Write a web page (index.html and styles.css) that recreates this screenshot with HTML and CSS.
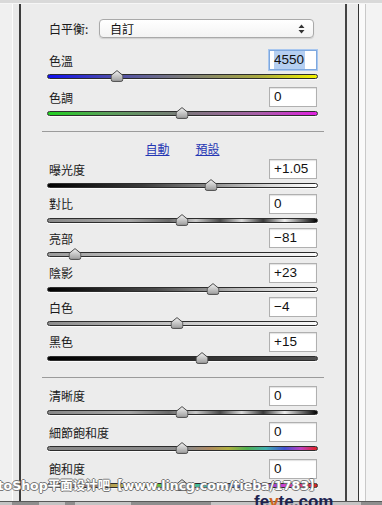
FILE: index.html
```html
<!DOCTYPE html>
<html lang="zh-Hant">
<head>
    <meta charset="UTF-8">
    <meta name="viewport" content="width=device-width, initial-scale=1.0">
    <title>基本調整</title>
    <link rel="stylesheet" href="styles.css">
</head>
<body>
    <svg class="defs" aria-hidden="true">
        <defs>
            <linearGradient id="thumb-fill" x1="0" y1="0" x2="0" y2="1">
                <stop offset="0" stop-color="#f2f2f2"/>
                <stop offset="1" stop-color="#9c9c9c"/>
            </linearGradient>
            <symbol id="thumb" viewBox="0 0 13 12">
                <path d="M6.5 0.6 L12.4 5.4 V9.4 Q12.4 11.4 10.4 11.4 H2.6 Q0.6 11.4 0.6 9.4 V5.4 Z" fill="url(#thumb-fill)" stroke="#4a4a4a" stroke-width="1"/>
            </symbol>
        </defs>
    </svg>

    <div class="screen">
        <div class="topbar"></div>

        <div class="columns">
            <div class="gutter g1"></div>
            <div class="gutter g2"></div>

            <div class="panel">
                <!-- 白平衡 -->
                <div class="wb-row">
                    <span class="wb-label">白平衡:</span>
                    <div class="select">
                        <span>自訂</span>
                        <svg class="updown" width="7" height="10" viewBox="0 0 7 10"><path d="M3.5 0.5 L6.5 4 H0.5 Z M3.5 9.5 L6.5 6 H0.5 Z" fill="#333"/></svg>
                    </div>
                </div>

                <div class="group group-wb">
                    <div class="row">
                        <div class="row-head"><span class="label">色溫</span><span class="num num-active"><span class="picked">4550</span></span></div>
                        <div class="track t-temp"><svg class="thumb" style="left:25.8%"><use href="#thumb"/></svg></div>
                    </div>
                    <div class="row">
                        <div class="row-head"><span class="label">色調</span><span class="num">0</span></div>
                        <div class="track t-tint"><svg class="thumb" style="left:49.8%"><use href="#thumb"/></svg></div>
                    </div>
                </div>

                <hr class="sep">

                <div class="links">
                    <a href="#">自動</a>
                    <a href="#">預設</a>
                </div>

                <div class="group group-tone">
                    <div class="row">
                        <div class="row-head"><span class="label">曝光度</span><span class="num">+1.05</span></div>
                        <div class="track t-exposure"><svg class="thumb" style="left:60.5%"><use href="#thumb"/></svg></div>
                    </div>
                    <div class="row">
                        <div class="row-head"><span class="label">對比</span><span class="num">0</span></div>
                        <div class="track t-contrast"><svg class="thumb" style="left:49.8%"><use href="#thumb"/></svg></div>
                    </div>
                    <div class="row">
                        <div class="row-head"><span class="label">亮部</span><span class="num">−81</span></div>
                        <div class="track t-highlights"><svg class="thumb" style="left:10%"><use href="#thumb"/></svg></div>
                    </div>
                    <div class="row">
                        <div class="row-head"><span class="label">陰影</span><span class="num">+23</span></div>
                        <div class="track t-shadows"><svg class="thumb" style="left:61.3%"><use href="#thumb"/></svg></div>
                    </div>
                    <div class="row">
                        <div class="row-head"><span class="label">白色</span><span class="num">−4</span></div>
                        <div class="track t-whites"><svg class="thumb" style="left:48%"><use href="#thumb"/></svg></div>
                    </div>
                    <div class="row">
                        <div class="row-head"><span class="label">黑色</span><span class="num">+15</span></div>
                        <div class="track t-blacks"><svg class="thumb" style="left:57.2%"><use href="#thumb"/></svg></div>
                    </div>
                </div>

                <hr class="sep sep-low">

                <div class="group group-presence">
                    <div class="row">
                        <div class="row-head"><span class="label">清晰度</span><span class="num">0</span></div>
                        <div class="track t-contrast"><svg class="thumb" style="left:49.8%"><use href="#thumb"/></svg></div>
                    </div>
                    <div class="row">
                        <div class="row-head"><span class="label">細節飽和度</span><span class="num">0</span></div>
                        <div class="track t-vibrance"><svg class="thumb" style="left:49.8%"><use href="#thumb"/></svg></div>
                    </div>
                    <div class="row">
                        <div class="row-head"><span class="label">飽和度</span><span class="num">0</span></div>
                        <div class="track t-saturation"><svg class="thumb" style="left:49.8%"><use href="#thumb"/></svg></div>
                    </div>
                </div>
            </div>

            <div class="gutter g3"></div>
            <div class="gutter g4"></div>
            <div class="gutter g5"></div>
            <div class="gutter g6"></div>
        </div>

        <div class="bottombar">
            <span class="seg s1"></span><span class="seg s2"></span><span class="seg s3"></span><span class="seg s4"></span>
        </div>

        <!-- 浮水印 -->
        <div class="watermark">PhotoShop平面设计吧【www.lincg.com/tieba/1783】</div>
        <div class="brand">fe<span>v</span>te.com</div>
    </div>
</body>
</html>
```

FILE: styles.css
```css
html, body {
    margin: 0;
    padding: 0;
}
body {
    width: 382px;
    height: 505px;
    overflow: hidden;
    background: #ececec;
    font-family: "Noto Sans CJK TC", "Noto Sans", sans-serif;
}
.defs {
    position: absolute;
    width: 0;
    height: 0;
    overflow: hidden;
}
.screen {
    position: relative;
    width: 382px;
    height: 505px;
    display: flex;
    flex-direction: column;
    overflow: hidden;
}
.topbar {
    height: 3px;
    background: #d9d9d9;
    border-bottom: 1px solid #f6f6f6;
}
.columns {
    flex: 1;
    display: flex;
    min-height: 0;
}
.gutter { flex: none; }
.g1 {
    width: 12px;
    background: #f0f0f0;
    border-right: 1px solid #fdfdfd;
}
.g2 {
    width: 6px;
    background: #e9e9e9;
    border-right: 2px solid #3c3c3c;
}
.g3 {
    width: 11px;
    background: #ebebeb;
    border-left: 2px solid #434343;
    border-right: 1px solid #333;
}
.g4 {
    width: 6px;
    background: #fafafa;
    border-right: 1px solid #c9c9c9;
}
.g6 {
    flex: 1;
    background: #f3f3f3;
}
.panel {
    width: 324px;
    flex: none;
    box-sizing: border-box;
    padding: 15px 27px 0 26px;
    background: #ececec;
}

/* 白平衡 select */
.wb-row {
    display: flex;
    align-items: center;
    height: 19px;
}
.wb-label {
    width: 52px;
    padding-left: 2px;
    box-sizing: border-box;
    font-size: 12px;
    color: #1a1a1a;
}
.select {
    width: 215px;
    height: 19px;
    box-sizing: border-box;
    display: flex;
    align-items: center;
    justify-content: space-between;
    padding: 0 8px 0 10px;
    background: linear-gradient(#ffffff, #f3f3f3);
    border: 1px solid #a9a9a9;
    border-radius: 4px;
    box-shadow: 0 1px 1px rgba(0,0,0,0.12);
    font-size: 12px;
    color: #111;
}

/* slider rows */
.group-wb { margin-top: 12px; }
.group-wb .row { margin-bottom: 8px; }
.group-wb .row:last-child { margin-bottom: 0; }
.group-tone .row { margin-bottom: 5.6px; }
.group-tone .row:last-child { margin-bottom: 0; }
.group-presence { margin-top: 8px; }
.group-presence .row { margin-bottom: 7.5px; }

.row-head {
    height: 20px;
    display: flex;
    align-items: center;
    justify-content: space-between;
}
.label {
    padding-left: 2px;
    font-size: 12px;
    color: #1a1a1a;
}
.num {
    width: 48px;
    height: 20px;
    margin-right: 1px;
    box-sizing: border-box;
    padding-left: 4px;
    background: #fff;
    border: 1px solid #b0b0b0;
    box-shadow: inset 0 1px 1px rgba(0,0,0,0.12);
    font-family: "Liberation Sans", Arial, sans-serif;
    font-size: 13.5px;
    line-height: 18px;
    color: #111;
}
.num-active {
    border-color: #7ea8de;
    box-shadow: 0 0 0 1px #a9c7ef;
}
.picked {
    display: inline-block;
    background: #b5cff1;
    padding-right: 1px;
}

.track {
    position: relative;
    height: 5px;
    margin-top: 4px;
    box-sizing: border-box;
    border: 1px solid #2d2d2d;
    border-radius: 3px;
    box-shadow: 0 1px 0 #fbfbfb;
}
.thumb {
    position: absolute;
    top: -5px;
    width: 13px;
    height: 12px;
    transform: translateX(-50%);
}
.t-temp { background: linear-gradient(to right, #1010f0, #4848b0 22%, #7a7a7a 50%, #a8a840 78%, #f2f200); }
.t-tint { background: linear-gradient(to right, #20d020, #5aa05a 22%, #7a7a7a 50%, #a860a8 78%, #e020e0); }
.t-exposure { background: linear-gradient(to right, #000, #3a3a3a 35%, #8a8a8a 60%, #d8d8d8 82%, #fff); }
.t-contrast { background: linear-gradient(to right, #888 0%, #a8a8a8 30%, #6a6a6a 45%, #c8c8c8 55%, #4a4a4a 64%, #dadada 72%, #3a3a3a 80%, #ececec 88%, #000 100%); }
.t-highlights { background: linear-gradient(to right, #9a9a9a, #cdcdcd 45%, #fafafa); }
.t-shadows { background: linear-gradient(to right, #000, #4a4a4a 40%, #b8b8b8 70%, #fbfbfb); }
.t-whites { background: linear-gradient(to right, #8c8c8c, #c4c4c4 45%, #fafafa); }
.t-blacks { background: linear-gradient(to right, #000, #2a2a2a 50%, #505050); }
.t-vibrance { background: linear-gradient(to right, #888 0%, #8a8a8a 52%, #b08a60 60%, #b0b040 67%, #50b050 74%, #40b0b0 81%, #4050d0 88%, #c040c0 94%, #e02020 100%); }
.t-saturation { background: linear-gradient(to right, #808080 0%, #a07070 15%, #c0c040 30%, #40c040 45%, #40c0c0 60%, #4040e0 75%, #d040d0 88%, #e02020 100%); }

.sep {
    margin: 15px -6px 0 -5px;
    height: 0;
    border: none;
    border-top: 1px solid #9b9b9b;
}
.sep-low { margin-top: 16px; }

.links {
    display: flex;
    justify-content: center;
    gap: 26px;
    margin-top: 10px;
    margin-bottom: 3px;
    height: 14px;
    line-height: 14px;
}
.links a {
    font-size: 12px;
    color: #2436b4;
    text-decoration: underline;
}

.bottombar {
    height: 3px;
    display: flex;
    background: #8e8e8e;
    border-top: 1px solid #585858;
}
.seg { height: 3px; background: #c4c4c4; }
.s1 { width: 12px; }
.s2 { width: 26px; margin-left: 27px; }
.s3 { width: 56px; margin-left: 10px; }
.s4 { width: 150px; margin-left: 80px; }

.watermark {
    position: absolute;
    left: -29px;
    top: 478px;
    white-space: nowrap;
    font-family: "DejaVu Sans", "Noto Sans CJK SC", sans-serif;
    font-weight: bold;
    font-size: 12.5px;
    line-height: 16px;
    color: #fff;
    text-shadow: 1px 0 0 #7a7a7a, -1px 0 0 #7a7a7a, 0 1px 0 #7a7a7a, 0 -1px 0 #7a7a7a;
}
.brand {
    position: absolute;
    left: 254px;
    top: 493px;
    font-family: "Liberation Sans", Arial, sans-serif;
    font-weight: bold;
    font-size: 17px;
    line-height: 17px;
    color: #1c2350;
}
.brand span { color: #d0661c; }
```
